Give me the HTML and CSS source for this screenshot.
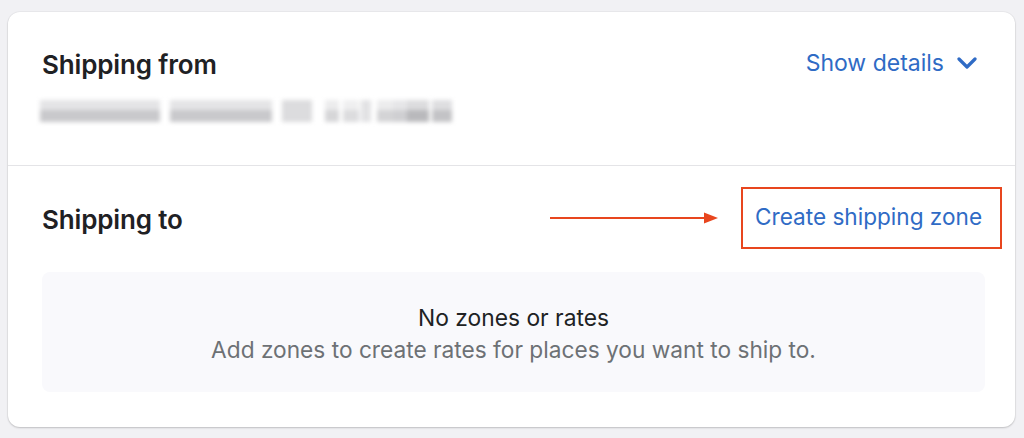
FILE: index.html
```html
<!DOCTYPE html>
<html lang="en">
<head>
<meta charset="utf-8">
<title>Shipping</title>
<link rel="stylesheet" href="styles.css">
</head>
<body>
<div class="page">
  <section class="card">
    <div class="section section-from">
      <div class="row">
        <h2 class="title">Shipping from</h2>
        <a class="link details" href="#">Show details
          <svg class="chev" width="20" height="12" viewBox="0 0 20 12" aria-hidden="true"><path d="M2 2 L10 10 L18 2" fill="none" stroke="#2f6bc5" stroke-width="3.2" stroke-linecap="round" stroke-linejoin="round"/></svg>
        </a>
      </div>
      <div class="address" aria-label="Address (hidden)">
        <span class="blk b1"></span><span class="blk b2"></span><span class="blk b3"></span><span class="blk b4"></span><span class="blk b5"></span><span class="blk b6"></span><span class="blk b7"></span><span class="blk b8"></span><span class="blk b9"></span><span class="blk b10"></span>
      </div>
    </div>
    <div class="section section-to">
      <div class="row row-to">
        <h2 class="title">Shipping to</h2>
        <div class="actions">
          <svg class="arrow" width="168" height="12" viewBox="0 0 168 12" aria-hidden="true"><line x1="0" y1="6" x2="156" y2="6" stroke="#e8461e" stroke-width="2"/><path d="M154 0.5 L168 6 L154 11.5 Z" fill="#e8461e"/></svg>
          <a class="link create" href="#">Create shipping zone</a>
        </div>
      </div>
      <div class="empty">
        <p class="empty-title">No zones or rates</p>
        <p class="empty-text">Add zones to create rates for places you want to ship to.</p>
      </div>
    </div>
  </section>
</div>
</body>
</html>
```
FILE: styles.css
```css
* { box-sizing: border-box; }
html, body { margin: 0; padding: 0; }
body {
  background: #f1f1f4;
  font-family: Inter, "Noto Sans", "Liberation Sans", sans-serif;
  color: #202223;
}
.page {
  padding: 12px 9px 11px 8px;
}
.card {
  background: #fff;
  border-radius: 12px;
  box-shadow: 0 1px 2px rgba(0, 0, 0, 0.18), 0 0 0 1px rgba(0, 0, 0, 0.03);
  overflow: hidden;
}
.section-from {
  height: 154px;
  padding: 36px 38px 0 34px;
  border-bottom: 1.5px solid #e4e4e7;
}
.row {
  display: flex;
  align-items: center;
  justify-content: space-between;
}
.title {
  margin: 0;
  font-size: 26px;
  font-weight: 600;
  line-height: 34px;
  letter-spacing: -0.15px;
  color: #1f2124;
}
.link {
  color: #2f6bc5;
  text-decoration: none;
  font-size: 23px;
  line-height: 30px;
}
.details {
  display: flex;
  align-items: center;
  gap: 13px;
  margin-top: -4px;
}
.chev { display: block; }
.address {
  display: flex;
  margin-top: 18px;
  margin-left: -2px;
  height: 22px;
  filter: blur(2px);
}
.blk {
  display: block;
  height: 22px;
  background: linear-gradient(#e4e4e6 0 45%, #c9c9cc 45% 100%);
}
.b1 { width: 120px; margin-right: 10px; }
.b2 { width: 102px; margin-right: 10px; }
.b3 { width: 30px; background: #dcdcde; margin-right: 13px; }
.b4 { width: 14px; background: linear-gradient(#ececed 0 45%, #d6d6d8 45%); margin-right: 4px; }
.b5 { width: 16px; background: linear-gradient(#efeff0 0 45%, #dcdcde 45%); margin-right: 2px; }
.b6 { width: 10px; background: #e2e2e4; margin-right: 6px; }
.b7 { width: 16px; background: linear-gradient(#ececed 0 45%, #d4d4d6 45%); }
.b8 { width: 14px; background: linear-gradient(#e6e6e8 0 45%, #cfcfd2 45%); }
.b9 { width: 22px; background: linear-gradient(#dcdcde 0 45%, #b9b9bc 45%); margin-right: 3px; }
.b10 { width: 20px; background: linear-gradient(#dedee0 0 45%, #c3c3c6 45%); }
.section-to {
  padding: 21px 30px 35px 34px;
}
.row-to { height: 62px; }
.row-to .title { margin-top: 4px; }
.actions {
  display: flex;
  align-items: center;
  margin-right: -17px;
}
.arrow { display: block; margin-right: 23px; margin-top: -1px; }
.create {
  display: block;
  border: 2px solid #e8461e;
  height: 62px;
  width: 261px;
  padding: 13px 0 0 12px;
  white-space: nowrap;
  font-size: 22.6px;
}
.empty {
  margin-top: 23px;
  height: 120px;
  background: #f9f9fc;
  border-radius: 8px;
  text-align: center;
  padding-top: 31px;
}
.empty p { margin: 0; }
.empty-title {
  font-size: 22.8px;
  line-height: 30px;
  color: #202223;
}
.empty-text {
  margin-top: 2px !important;
  font-size: 22.7px;
  line-height: 30px;
  color: #6d7175;
}
```
